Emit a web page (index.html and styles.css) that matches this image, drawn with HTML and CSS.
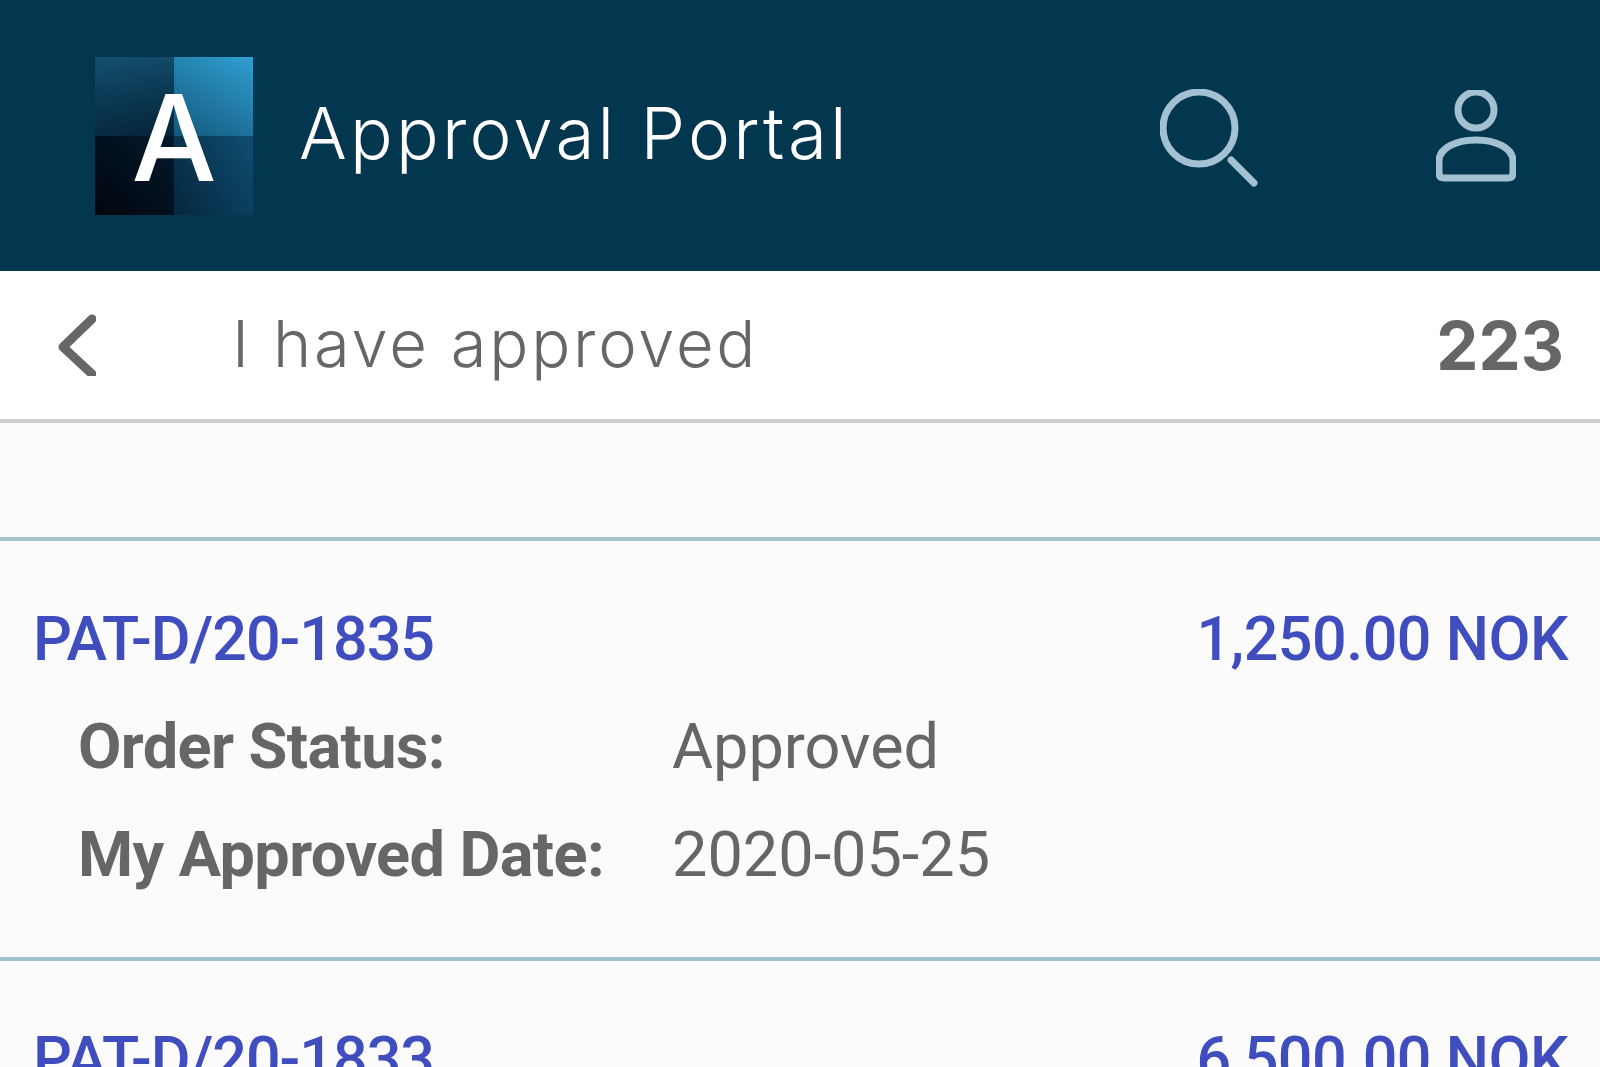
FILE: index.html
```html
<!DOCTYPE html>
<html lang="en">
<head>
    <meta charset="UTF-8">
    <meta name="viewport" content="width=device-width, initial-scale=1.0">
    <title>Approval Portal</title>
    <link rel="stylesheet" href="styles.css">
</head>
<body>
    <header class="app-header">
        <div class="logo">
            <span class="logo-tile tile-tl"></span>
            <span class="logo-tile tile-tr"></span>
            <span class="logo-tile tile-bl"></span>
            <span class="logo-tile tile-br"></span>
            <span class="logo-letter">A</span>
        </div>
        <div class="app-title">Approval Portal</div>
        <button class="icon-btn search-btn">
            <svg class="search-icon" viewBox="0 0 98 98">
                <circle cx="39" cy="39" r="36"/>
                <path d="M71 71 L94 94"/>
            </svg>
        </button>
        <button class="icon-btn user-btn">
            <svg class="user-icon" viewBox="0 0 80 92">
                <circle cx="40" cy="20" r="18"/>
                <path d="M3 83 V71 C3 58 20 50 40 50 C60 50 77 58 77 71 V83 Q77 88 72 88 H8 Q3 88 3 83 Z"/>
            </svg>
        </button>
    </header>

    <div class="sub-header">
        <button class="back-btn">
            <svg class="back-icon" viewBox="0 0 38 62">
                <path d="M34 5 L5 33 L34 60" class="back-path"/>
            </svg>
        </button>
        <div class="sub-title">I have approved</div>
        <div class="count">223</div>
    </div>

    <div class="order-list">
        <div class="order">
            <div class="order-top">
                <span>PAT-D/20-1835</span>
                <span class="order-amount">1,250.00 NOK</span>
            </div>
            <div class="order-row">
                <span class="order-label">Order Status:</span>
                <span class="order-value">Approved</span>
            </div>
            <div class="order-row">
                <span class="order-label">My Approved Date:</span>
                <span class="order-value">2020-05-25</span>
            </div>
        </div>
        <div class="order">
            <div class="order-top">
                <span>PAT-D/20-1833</span>
                <span class="order-amount">6,500.00 NOK</span>
            </div>
        </div>
    </div>
</body>
</html>
```

FILE: styles.css
```css
* {
    margin: 0;
    padding: 0;
    box-sizing: border-box;
}

html, body {
    height: 100%;
    overflow: hidden;
}

body {
    font-family: Roboto, sans-serif;
    background: #fbfbfb;
}

button {
    background: none;
    border: none;
    display: flex;
}

.app-header {
    height: 271px;
    background: #03364f;
    display: flex;
    align-items: center;
    padding: 1px 0 0 95px;
}

.logo {
    width: 158px;
    height: 158px;
    display: grid;
    grid-template-columns: 1fr 1fr;
    grid-template-rows: 1fr 1fr;
    position: relative;
    flex-shrink: 0;
}

.tile-tl { background: linear-gradient(170deg, #14506e, #0a3650 55%, #06223a); }
.tile-tr { background: linear-gradient(30deg, #14587c, #2f9fd2); }
.tile-bl { background: linear-gradient(40deg, #01060f, #04192b); }
.tile-br { background: linear-gradient(60deg, #05263d, #0e4d71); }

.logo-letter {
    position: absolute;
    left: 0;
    right: 0;
    top: 21px;
    text-align: center;
    font-family: Inter, sans-serif;
    font-weight: 500;
    font-size: 120px;
    line-height: 120px;
    color: #fff;
}

.app-title {
    margin-left: 46px;
    flex: 1;
    font-family: Inter, sans-serif;
    font-size: 71px;
    font-weight: 350;
    letter-spacing: 3.2px;
    color: #fff;
    margin-top: -6px;
}

.icon-btn svg {
    fill: none;
    stroke: #a3c1d0;
    stroke-width: 7;
    stroke-linecap: round;
    stroke-linejoin: round;
}

.search-icon {
    width: 98px;
    height: 98px;
}

.search-btn {
    margin-right: 178px;
    margin-top: 4px;
}

.user-icon {
    width: 80px;
    height: 92px;
}

.user-btn {
    margin-right: 84px;
}

.sub-header {
    height: 152px;
    background: #fff;
    border-bottom: 4px solid #cfcfcf;
    display: flex;
    align-items: center;
    padding: 0 36px 0 58px;
    color: #666;
}

.back-icon {
    width: 38px;
    height: 62px;
}

.back-path {
    fill: none;
    stroke: #666;
    stroke-width: 9;
    stroke-linecap: round;
    stroke-linejoin: round;
}

.sub-title {
    margin-left: 136px;
    flex: 1;
    font-family: Inter, sans-serif;
    font-size: 65px;
    font-weight: 300;
    letter-spacing: 2.8px;
    margin-top: -3px;
}

.count {
    font-family: Inter, sans-serif;
    font-size: 67px;
    font-weight: 700;
}

.order-list {
    padding-top: 114px;
}

.order {
    border-top: 4px solid #a4c3cf;
    height: 420px;
    padding: 60px 32px 0 33px;
}

.order-top {
    display: flex;
    justify-content: space-between;
    font-size: 61px;
    font-weight: 500;
    letter-spacing: -1px;
    line-height: 76px;
    color: #3f4dbf;
}

.order-amount {
    letter-spacing: -0.5px;
}

.order-row {
    display: flex;
    align-items: center;
    height: 108px;
    padding-left: 45px;
    font-size: 63px;
    color: #666;
}

.order-top + .order-row {
    margin-top: 15px;
}

.order-label {
    width: 594px;
    font-weight: 700;
    letter-spacing: -0.6px;
}
```
